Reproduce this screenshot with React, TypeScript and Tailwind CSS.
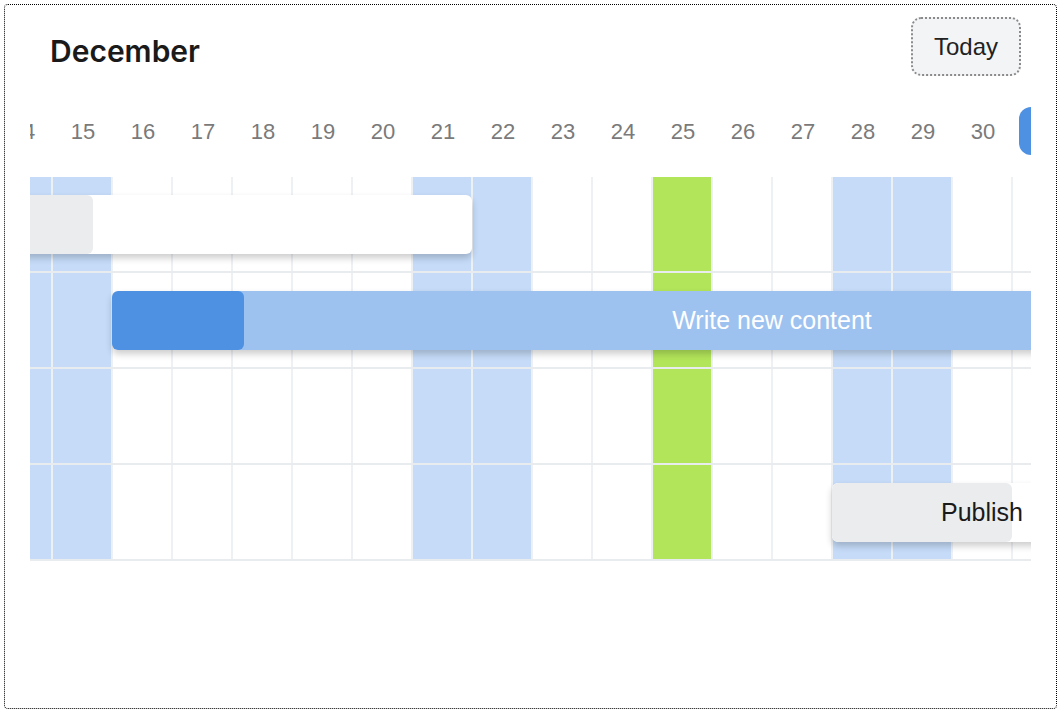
import React from "react";

const FIRST_DAY = 14;
const DAYS = Array.from({ length: 18 }, (_, i) => FIRST_DAY + i);
const WEEKENDS = [14, 15, 21, 22, 28, 29];
const HOLIDAY = 25;
const TODAY = 31;

type Task = {
  row: number;
  left: number;
  width: number;
  progress: number;
  label: string;
  kind: "plain" | "blue";
};

const tasks: Task[] = [
  { row: 0, left: -121, width: 600, progress: 221, label: "", kind: "plain" },
  { row: 1, left: 119, width: 1320, progress: 132, label: "Write new content", kind: "blue" },
  { row: 3, left: 839, width: 300, progress: 180, label: "Publish", kind: "plain" },
];

function cellColor(day: number) {
  if (day === HOLIDAY) return "bg-[#b3e55a]";
  if (WEEKENDS.includes(day)) return "bg-[#c5dbf8]";
  return "bg-white";
}

function TaskBar({ task }: { task: Task }) {
  const blue = task.kind === "blue";
  return (
    <div
      className={`absolute top-[18px] h-[59px] rounded-[6px] shadow-[0_4px_7px_rgba(0,0,0,0.2)] overflow-hidden ${
        blue ? "bg-[#9ec2ef]" : "bg-white"
      }`}
      style={{ left: task.left, width: task.width }}
    >
      <div
        className={`absolute left-0 top-0 h-full rounded-[6px] ${
          blue ? "bg-[#4e91e3]" : "bg-[#ebecee]"
        }`}
        style={{ width: task.progress }}
      />
      <div
        className={`relative h-full flex items-center justify-center text-[25px] ${
          blue ? "text-white" : "text-[#1a1a1a]"
        }`}
      >
        {task.label}
      </div>
    </div>
  );
}

export default function App() {
  return (
    <div
      className="m-1 h-[705px] border border-dotted border-black rounded-[4px] bg-white"
      style={{ fontFamily: '"Liberation Sans", Arial, sans-serif' }}
    >
      <div className="flex items-start justify-between pl-[45px] pr-[35px] pt-[12px]">
        <div
          className="mt-[16px] text-[30px] leading-[36px] font-semibold text-[#1a1a1a]"
          style={{ fontFamily: "Inter, sans-serif" }}
        >
          December
        </div>
        <button className="w-[110px] h-[59px] rounded-[10px] border-2 border-dotted border-[#8a8a8a] bg-[#f3f4f6] text-[24px] text-[#222]">
          Today
        </button>
      </div>

      <div className="mx-[25px] overflow-hidden">
        <div className="ml-[-37px] w-[1080px]">
          <div className="mt-[31px] flex h-[48px]">
            {DAYS.map((d) => (
              <div key={d} className="w-[60px] shrink-0 flex items-center justify-center">
                {d === TODAY ? (
                  <div className="w-[48px] h-[48px] rounded-[12px] bg-[#4e91e3] text-white text-[22px] flex items-center justify-center">
                    {d}
                  </div>
                ) : (
                  <span className="text-[22px] text-[#7a7a7a]">{d}</span>
                )}
              </div>
            ))}
          </div>

          <div className="mt-[22px]">
            {[0, 1, 2, 3].map((r) => (
              <div key={r} className="relative flex h-[96px] border-b-2 border-[#e9ecef]">
                {DAYS.map((d) => (
                  <div
                    key={d}
                    className={`w-[60px] shrink-0 h-full border-r-2 border-[#eef1f4] ${cellColor(d)}`}
                  />
                ))}
                {tasks
                  .filter((t) => t.row === r)
                  .map((t, i) => (
                    <TaskBar key={i} task={t} />
                  ))}
              </div>
            ))}
          </div>
        </div>
      </div>
    </div>
  );
}
